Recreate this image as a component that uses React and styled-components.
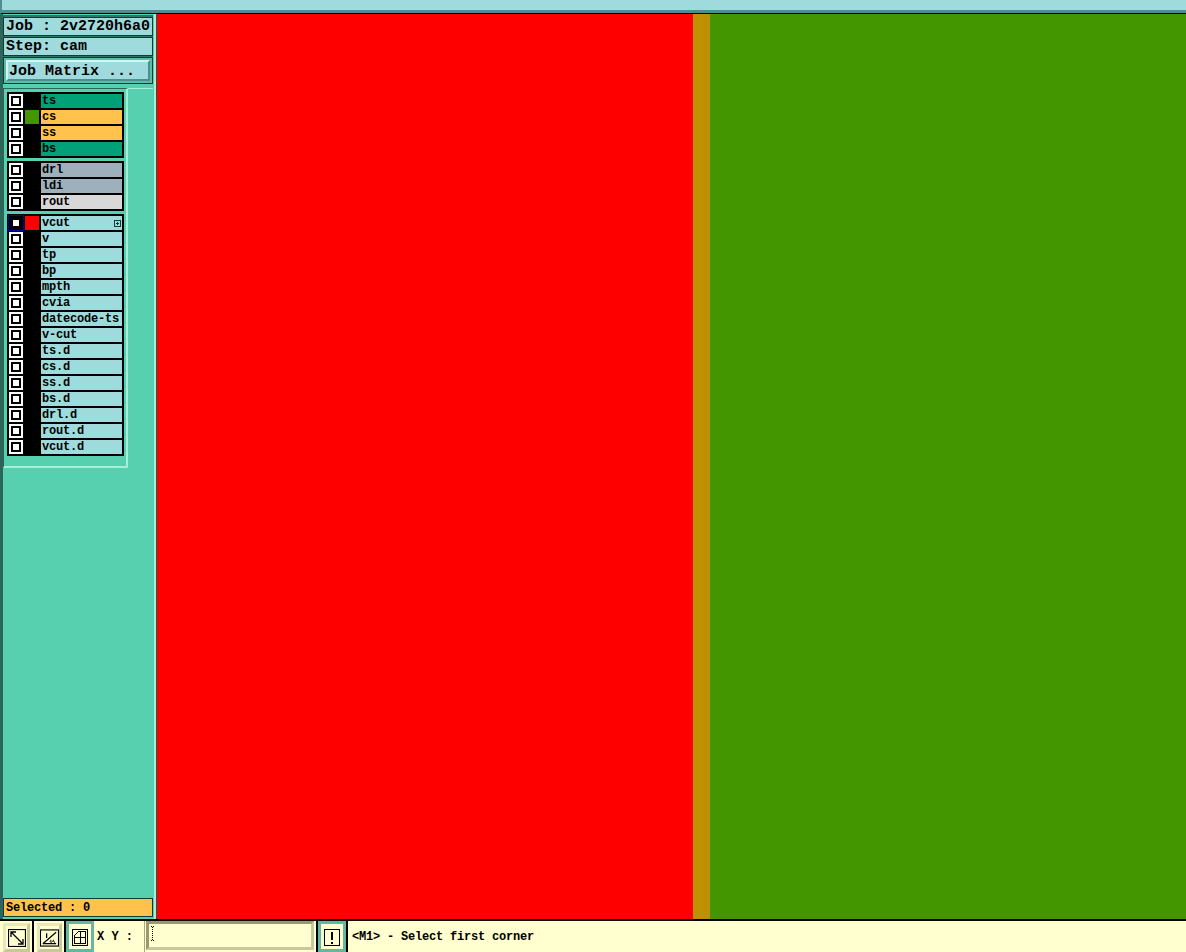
import React from "react";
import styled, { createGlobalStyle } from "styled-components";

const Global = createGlobalStyle`
  html, body { margin: 0; padding: 0; background: #fff; }
  * { box-sizing: border-box; }
`;
const Screen = styled.div`
  width: 1186px; height: 952px; display: flex; flex-direction: column; overflow: hidden;
  font-family: "Liberation Mono", monospace; font-weight: 700; color: #000;
`;
const TopBar = styled.div`
  height: 14px; flex: none; background: #9fdbdc;
  border-left: 2px solid #4f8d94; border-bottom: 1px solid #000; box-shadow: inset 0 -3px 0 #4f8d94;
`;
const Middle = styled.div`flex: 1; display: flex; min-height: 0;`;
const Sidebar = styled.aside`
  width: 157px; flex: none; display: flex; flex-direction: column; background: #57d0b0;
  border-left: 3px solid #2c6658; border-right: 1px solid #1f5a4e; box-shadow: inset -2px 0 0 #a5eed8;
`;
const InfoBox = styled.div`
  width: 150px; margin-top: 1px; background: #2e7468; padding: 2px 0 1px; display: flex; flex-direction: column; gap: 1px;
`;
const InfoRow = styled.div`
  height: 19px; background: #9fdbdc; border: 1px solid #103c36; padding-left: 2px;
  font-size: 15px; line-height: 17px; white-space: pre;
`;
const MatrixFrame = styled.div`
  width: 150px; height: 27px; background: #57c0a8; border: 1px solid #103c36; padding: 2px;
`;
const MatrixButton = styled.div`
  height: 100%; font-size: 15px; line-height: 19px; padding-left: 1px; white-space: pre; background: #9fdbdc;
  border-style: solid; border-width: 2px; border-color: #d2f4f4 #4f8d94 #4f8d94 #d2f4f4;
`;
const PanelRow = styled.div`display: flex; margin-top: 4px;`;
const LayersPanel = styled.div`
  width: 125px; height: 380px; flex: none; display: flex; flex-direction: column; gap: 3px; padding: 3px 0 0 3px; background: #57d0b0;
  border-style: solid; border-width: 1px 2px 2px 1px; border-color: #2c6658 #a5eed8 #a5eed8 #2c6658;
`;
const Track = styled.div`
  width: 25px; border-top: 1px solid #a5eed8;
`;
const Group = styled.div`
  width: 117px; background: #000; padding: 2px 2px 0; display: flex; flex-direction: column; flex: none;
`;
const Row = styled.div`height: 16px; flex: none; display: flex; gap: 2px;`;
const Check = styled.div`
  width: 14px; height: 14px; flex: none; background: #000; display: flex; align-items: center; justify-content: center;
  border: 2px solid ${p => (p.$active ? "#000" : "#fff")};
  box-shadow: ${p => (p.$active ? "0 0 0 1px #0000a8" : "none")};
  &::before { content: ""; width: 6px; height: 6px; flex: none; background: #fff; }
`;
const Swatch = styled.div`width: 14px; height: 14px; flex: none; background: ${p => p.$color};`;
const Name = styled.div`
  width: 81px; height: 14px; flex: none; padding: 0 1px; background: ${p => p.$bg}; font-size: 12px; line-height: 14px; letter-spacing: -0.2px;
  display: flex; align-items: center; justify-content: space-between; white-space: pre; overflow: hidden;
`;
const Spacer = styled.div`flex: 1;`;
const Selected = styled.div`
  width: 150px; height: 19px; margin-bottom: 2px; background: #ffc34d; border: 1px solid #103c36; padding-left: 2px;
  font-size: 12px; line-height: 18px; letter-spacing: -0.2px; white-space: pre;
`;
const Canvas = styled.main`flex: 1; display: flex;`;
const Band = styled.div`
  background: ${p => p.$color}; width: ${p => (p.$w ? p.$w + "px" : "auto")}; flex: ${p => (p.$w ? "none" : 1)};
`;
const BottomBar = styled.footer`
  height: 33px; flex: none; display: flex; background: #ffffcf; border-top: 2px solid #000; font-size: 12px; line-height: 33px;
`;
const ToolSlot = styled.div`
  width: ${p => p.$w}px; flex: none; padding: ${p => (p.$on ? "0" : "2px 2px 0 3px")};
`;
const ToolFrame = styled.div`
  width: 100%; height: 100%; display: flex; align-items: center; justify-content: center; padding-top: 1px;
  border-style: solid; border-width: 3px; background: #ffffcf;
  border-color: ${p => (p.$on ? "#63b8a0" : "#e8e8ba #c8c89c #c8c89c #e8e8ba")};
`;
const Divider = styled.div`width: 2px; flex: none; background: #000;`;
const CoordLabel = styled.div`width: 51px; flex: none; padding-left: 3px; white-space: pre; border-right: 1px solid #a8a880;`;
const CoordInput = styled.div`
  width: 168px; height: 29px; flex: none; margin: 0 2px 0 1px; padding: 2px 0 0 2px; background: #ffffcf;
  border-style: solid; border-width: 3px; border-color: #9a9a70 #c8c89c #c8c89c #9a9a70;
  display: flex; align-items: flex-start;
`;
const Message = styled.div`padding-left: 4px; white-space: pre; letter-spacing: -0.2px;`;

const S = { green: "#00a078", orange: "#ffc34d", slate: "#9db0bb", grey: "#d8d8d8", cyan: "#9fdbdc" };
const groups = [
  [["ts", S.green], ["cs", S.orange, "#449600"], ["ss", S.orange], ["bs", S.green]],
  [["drl", S.slate], ["ldi", S.slate], ["rout", S.grey]],
  [["vcut", S.cyan, "#ff0000", true], ["v"], ["tp"], ["bp"], ["mpth"], ["cvia"], ["datecode-ts"], ["v-cut"], ["ts.d"], ["cs.d"], ["ss.d"], ["bs.d"], ["drl.d"], ["rout.d"], ["vcut.d"]],
];

export default function App() {
  return (
    <Screen>
      <Global />
      <TopBar />
      <Middle>
        <Sidebar>
          <InfoBox>
            <InfoRow>Job : 2v2720h6a0</InfoRow>
            <InfoRow>Step: cam</InfoRow>
          </InfoBox>
          <MatrixFrame><MatrixButton>Job Matrix ...</MatrixButton></MatrixFrame>
          <PanelRow>
            <LayersPanel>
              {groups.map((g, i) => (
                <Group key={i}>
                  {g.map(([name, bg = S.cyan, sw = "#000", active]) => (
                    <Row key={name}>
                      <Check $active={active} />
                      <Swatch $color={sw} />
                      <Name $bg={bg}>
                        {name}
                        {active && (
                          <svg width="7" height="7" viewBox="0 0 7 7" shapeRendering="crispEdges">
                            <rect x="0.5" y="0.5" width="6" height="6" fill="none" stroke="#103c36" />
                            <path d="M3.5 2v3M2 3.5h3" stroke="#103c36" />
                          </svg>
                        )}
                      </Name>
                    </Row>
                  ))}
                </Group>
              ))}
            </LayersPanel>
            <Track />
          </PanelRow>
          <Spacer />
          <Selected>Selected : 0</Selected>
        </Sidebar>
        <Canvas>
          <Band $color="#ff0000" $w={536} />
          <Band $color="#c09000" $w={17} />
          <Band $color="#449600" />
        </Canvas>
      </Middle>
      <BottomBar>
        <ToolSlot $w={32}>
          <ToolFrame>
            <svg width="18" height="18" viewBox="0 0 18 18" fill="none" stroke="#000">
              <rect x="0.5" y="0.5" width="17" height="17" strokeWidth="1.2" />
              <path d="M3 8V3h5M3 3l12 12M15 10v5h-5" strokeWidth="1.3" />
            </svg>
          </ToolFrame>
        </ToolSlot>
        <Divider />
        <ToolSlot $w={30}>
          <ToolFrame>
            <svg width="20" height="18" viewBox="0 0 20 18" fill="none" stroke="#000">
              <rect x="0.5" y="0.5" width="19" height="17" strokeWidth="1.2" />
              <path d="M3 15L17 3M3 15h14M7 4v5" strokeWidth="1.3" />
              <path d="M12 11.5c-1.5-.6-2 2-.4 2s1.6-1.6 3-2.5M14 11.5l1.5 2.5" strokeWidth="1" />
            </svg>
          </ToolFrame>
        </ToolSlot>
        <Divider />
        <ToolSlot $w={28} $on>
          <ToolFrame $on>
            <svg width="16" height="17" viewBox="0 0 16 17" fill="none" stroke="#000" shapeRendering="crispEdges">
              <rect x="0.5" y="0.5" width="15" height="16" />
              <path d="M2.5 14.5V6.5l4-4h7v12h-11zM2.5 8.5h11M8.5 2.5v12" />
            </svg>
          </ToolFrame>
        </ToolSlot>
        <CoordLabel>X Y :</CoordLabel>
        <CoordInput>
          <svg width="4" height="15" viewBox="0 0 4 15" stroke="#000" shapeRendering="crispEdges">
            <path d="M0 .5h3M0 14.5h3M1.5 1v13" strokeDasharray="1 1" />
          </svg>
        </CoordInput>
        <Divider />
        <ToolSlot $w={28} $on>
          <ToolFrame $on>
            <svg width="16" height="17" viewBox="0 0 16 17" fill="none" stroke="#000" shapeRendering="crispEdges">
              <rect x="0.5" y="0.5" width="15" height="16" />
              <path d="M8 3v8M8 13v2" strokeWidth="2" />
            </svg>
          </ToolFrame>
        </ToolSlot>
        <Divider />
        <Message>{"<M1> - Select first corner"}</Message>
      </BottomBar>
    </Screen>
  );
}
